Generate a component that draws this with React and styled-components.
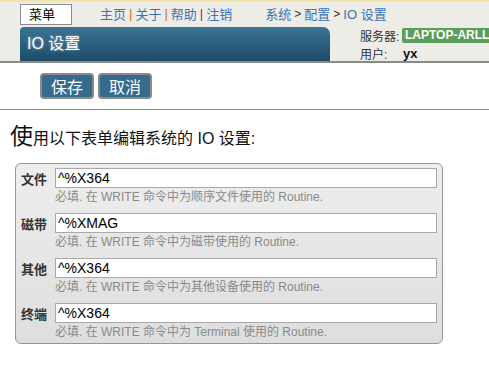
import React from 'react';
import styled, { createGlobalStyle } from 'styled-components';

const GlobalStyle = createGlobalStyle`
  body {
    margin: 0;
    background: #fff;
    font-family: "Liberation Sans", Arial, "Noto Sans CJK SC", sans-serif;
    overflow: hidden;
  }
`;

const devices = [
  { label: '文件', value: '^%X364', help: '必填. 在 WRITE 命令中为顺序文件使用的 Routine.' },
  { label: '磁带', value: '^%XMAG', help: '必填. 在 WRITE 命令中为磁带使用的 Routine.' },
  { label: '其他', value: '^%X364', help: '必填. 在 WRITE 命令中为其他设备使用的 Routine.' },
  { label: '终端', value: '^%X364', help: '必填. 在 WRITE 命令中为 Terminal 使用的 Routine.' }
];

const App = () => {
  return (
    <>
      <GlobalStyle />
      <Header>
        <TopRow>
          <MenuBox>菜单</MenuBox>
          <Nav>
            <NavLink>主页</NavLink>
            <Sep>|</Sep>
            <NavLink>关于</NavLink>
            <Sep>|</Sep>
            <NavLink>帮助</NavLink>
            <Sep $visited>|</Sep>
            <NavLink>注销</NavLink>
          </Nav>
          <Crumbs>
            <NavLink>系统</NavLink>
            <CrumbSep>&gt;</CrumbSep>
            <NavLink>配置</NavLink>
            <CrumbSep>&gt;</CrumbSep>
            <NavLink>IO 设置</NavLink>
          </Crumbs>
        </TopRow>
        <BottomRow>
          <TitleBar>IO 设置</TitleBar>
          <ServerInfo>
            <InfoLine>
              <InfoLabel>服务器:</InfoLabel>
              <ServerBadge>LAPTOP-ARLL</ServerBadge>
            </InfoLine>
            <InfoLine>
              <InfoLabel>用户:</InfoLabel>
              <UserName>yx</UserName>
            </InfoLine>
          </ServerInfo>
        </BottomRow>
      </Header>

      <Toolbar>
        <Button>保存</Button>
        <Button>取消</Button>
      </Toolbar>

      <Content>
        <Intro>
          <BigChar>使</BigChar>用以下表单编辑系统的 IO 设置:
        </Intro>
        <FormBox>
          {devices.map((d) => (
            <FieldRow key={d.label}>
              <FieldLabel>{d.label}</FieldLabel>
              <FieldInput type="text" defaultValue={d.value} />
              <Help>{d.help}</Help>
            </FieldRow>
          ))}
        </FormBox>
      </Content>
    </>
  );
};

const Header = styled.div`
  background: #eeece7;
  border-top: 2px solid #f4e3a9;
  border-bottom: 2px solid #8a8a8a;
  height: 59px;
`;

const TopRow = styled.div`
  display: flex;
  align-items: center;
  height: 23px;
  padding-left: 20px;
`;

const MenuBox = styled.div`
  box-sizing: border-box;
  width: 52px;
  height: 21px;
  margin-top: 2px;
  background: #fff;
  border: 1px solid #8c8c8c;
  font-size: 13px;
  line-height: 19px;
  padding-left: 8px;
  color: #000;
`;

const Nav = styled.div`
  display: flex;
  align-items: center;
  gap: 3px;
  margin-left: 28px;
  font-size: 13px;
`;

const NavLink = styled.span`
  color: #3c73b3;
`;

const Sep = styled.span`
  color: ${(p) => (p.$visited ? '#8a1a8a' : '#c2790a')};
`;

const Crumbs = styled.div`
  display: flex;
  align-items: center;
  gap: 3px;
  margin-left: 33px;
  font-size: 13px;
`;

const CrumbSep = styled.span`
  color: #333;
  font-size: 12px;
`;

const BottomRow = styled.div`
  display: flex;
  height: 36px;
  padding-left: 20px;
`;

const TitleBar = styled.div`
  flex-shrink: 0;
  width: 310px;
  margin-top: 2px;
  border-radius: 4px 7px 0 0;
  background: linear-gradient(#3a7494, #1d4b67);
  color: #fff;
  font-size: 16px;
  line-height: 34px;
  padding-left: 7px;
  box-sizing: border-box;
  text-shadow: 0 0 3px rgba(255, 255, 255, 0.5);
`;

const ServerInfo = styled.div`
  display: flex;
  flex-direction: column;
  gap: 2px;
  margin-left: 30px;
  padding-top: 2px;
  font-size: 12px;
  color: #333;
`;

const InfoLine = styled.div`
  display: flex;
  align-items: center;
  height: 16px;
  white-space: nowrap;
`;

const InfoLabel = styled.span`
  width: 42px;
  flex-shrink: 0;
`;

const ServerBadge = styled.span`
  background: #5b9d5a;
  color: #fff;
  font-weight: bold;
  font-size: 12px;
  line-height: 15px;
  padding: 0 3px;
  border-radius: 2px;
`;

const UserName = styled.span`
  font-weight: bold;
  color: #111;
  font-size: 13px;
  padding-left: 1px;
`;

const Toolbar = styled.div`
  display: flex;
  gap: 4px;
  padding: 10px 0 10px 40px;
  border-bottom: 1px solid #8a8a8a;
`;

const Button = styled.button`
  box-sizing: border-box;
  width: 54px;
  height: 26px;
  background: #356b8d;
  color: #fff;
  border: 2px solid #8a8a8a;
  border-radius: 4px;
  font-family: "Noto Sans CJK SC", sans-serif;
  font-size: 16px;
  line-height: 20px;
  padding: 0;
`;

const Content = styled.div`
  padding: 12px 0 0 10px;
`;

const Intro = styled.div`
  font-size: 16px;
  color: #111;
  line-height: 28px;
`;

const BigChar = styled.span`
  font-size: 23px;
`;

const FormBox = styled.div`
  box-sizing: border-box;
  width: 428px;
  margin: 10px 0 0 5px;
  padding: 4px 5px 3px 4px;
  border: 1px solid #959595;
  border-radius: 6px;
  background: linear-gradient(#eeeeee, #dedede);
`;

const FieldRow = styled.div`
  display: grid;
  grid-template-columns: 35px 1fr;
  align-items: center;
  margin-bottom: 8px;

  &:last-child {
    margin-bottom: 0;
  }
`;

const FieldLabel = styled.label`
  font-size: 13px;
  font-weight: bold;
  color: #333;
  padding-left: 1px;
`;

const FieldInput = styled.input`
  box-sizing: border-box;
  height: 20px;
  border: 1px solid #a9a9a9;
  background: #fff;
  font-family: "Liberation Sans", Arial, sans-serif;
  font-size: 14px;
  color: #000;
  padding: 0 2px;
  outline: none;
`;

const Help = styled.div`
  grid-column: 2;
  font-size: 12px;
  line-height: 16px;
  color: #8a8a8a;
  margin-top: 1px;
`;

export default App;
